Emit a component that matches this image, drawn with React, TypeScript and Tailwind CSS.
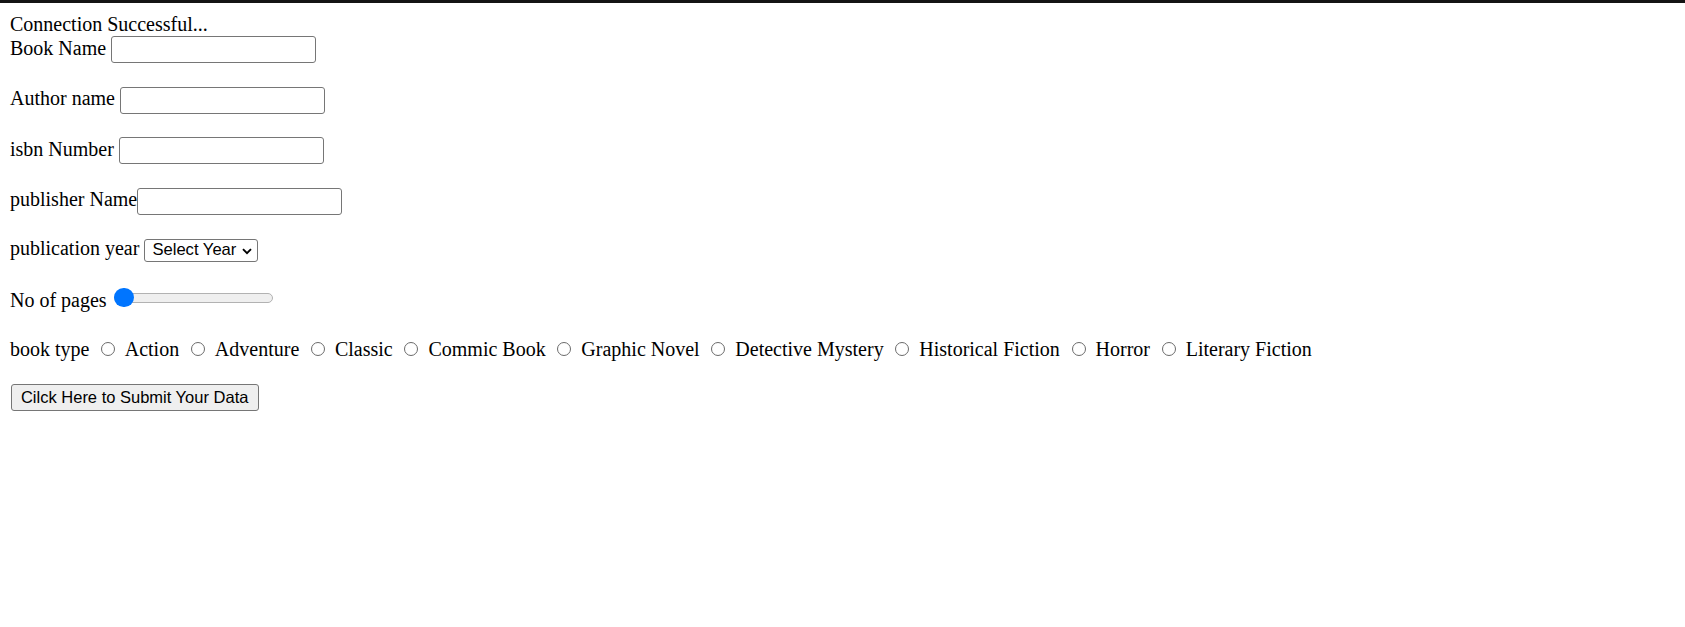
import React from 'react';

const bookTypes = [
  'Action',
  'Adventure',
  'Classic',
  'Commic Book',
  'Graphic Novel',
  'Detective Mystery',
  'Historical Fiction',
  'Horror',
  'Literary Fiction',
];

const TextField: React.FC<{ label: string; gap?: boolean; className?: string }> = ({ label, gap = true, className = '' }) => {
  return (
    <div className={`flex items-start h-[27px] ${className}`}>
      <span className="leading-[23px] mt-[0.4px] whitespace-pre">{label}</span>
      <input
        type="text"
        className={`${gap ? 'ml-[5px]' : ''} w-[205px] h-[27px] border border-[#767676] rounded-[3px] bg-white px-[3px] font-['Liberation_Sans',sans-serif] text-[16px] outline-none`}
      />
    </div>
  );
};

export default function App() {
  return (
    <div className="min-h-screen bg-white font-['Liberation_Serif',serif] text-[20px] text-black">
      <div className="h-[3px] bg-[#141414]"></div>
      <div className="flex flex-col items-start px-[10px] pt-[9.7px]">
        <div className="leading-[23px] h-[23px]">Connection Successful...</div>

        <TextField label="Book Name" className="mt-[0.6px]" />
        <TextField label="Author name" className="mt-[23.5px]" />
        <TextField label="isbn Number" className="mt-[23.5px]" />
        <TextField label="publisher Name" gap={false} className="mt-[23.5px]" />

        {/* publication year */}
        <div className="flex items-start mt-[22.6px] h-[24.3px]">
          <span className="leading-[23px]">publication year</span>
          <div className="relative flex ml-[5px] mt-[1.9px]">
            <select className="block appearance-none w-[114px] h-[22.4px] border border-[#767676] rounded-[3px] bg-white pl-[7px] pr-[20px] py-0 font-['Liberation_Sans',sans-serif] text-[16.6px] leading-[20px] text-black outline-none">
              <option>Select Year</option>
            </select>
            <svg
              className="absolute right-[6px] top-[8.5px] pointer-events-none"
              width="10"
              height="7"
              viewBox="0 0 10 7"
            >
              <polyline points="1,1.2 5,5.2 9,1.2" fill="none" stroke="#000" strokeWidth="1.9" />
            </svg>
          </div>
        </div>

        {/* No of pages */}
        <div className="flex items-start mt-[27px] h-[23px]">
          <span className="leading-[23px]">No of pages</span>
          <div className="relative ml-[7.5px] mt-[-0.7px] w-[159px] h-[20px]">
            <div className="absolute left-0 right-0 top-[5px] h-[9.6px] rounded-full bg-[#efefef] border border-[#b2b2b2]"></div>
            <div className="absolute left-0 top-0 w-[19.5px] h-[19.5px] rounded-full bg-[#0075ff]"></div>
          </div>
        </div>

        {/* book type */}
        <div className="flex items-start mt-[26px] h-[23px]">
          <span className="leading-[23px]">book type</span>
          {bookTypes.map((t, i) => (
            <label key={t} className={`flex items-start ${i === 0 ? 'ml-[11.3px]' : 'ml-[11.7px]'}`}>
              <input
                type="radio"
                name="booktype"
                className="appearance-none mt-[4.6px] w-[14px] h-[14px] rounded-full border border-[#6b6b6b] bg-white"
              />
              <span className="ml-[10px] leading-[23px]">{t}</span>
            </label>
          ))}
        </div>

        <button className="mt-[23.3px] ml-[0.7px] w-[248px] h-[26.7px] border border-[#767676] rounded-[3px] bg-[#efefef] font-['Liberation_Sans',sans-serif] text-[16.5px] leading-[20px] text-black">
          Cilck Here to Submit Your Data
        </button>
      </div>
    </div>
  );
}
